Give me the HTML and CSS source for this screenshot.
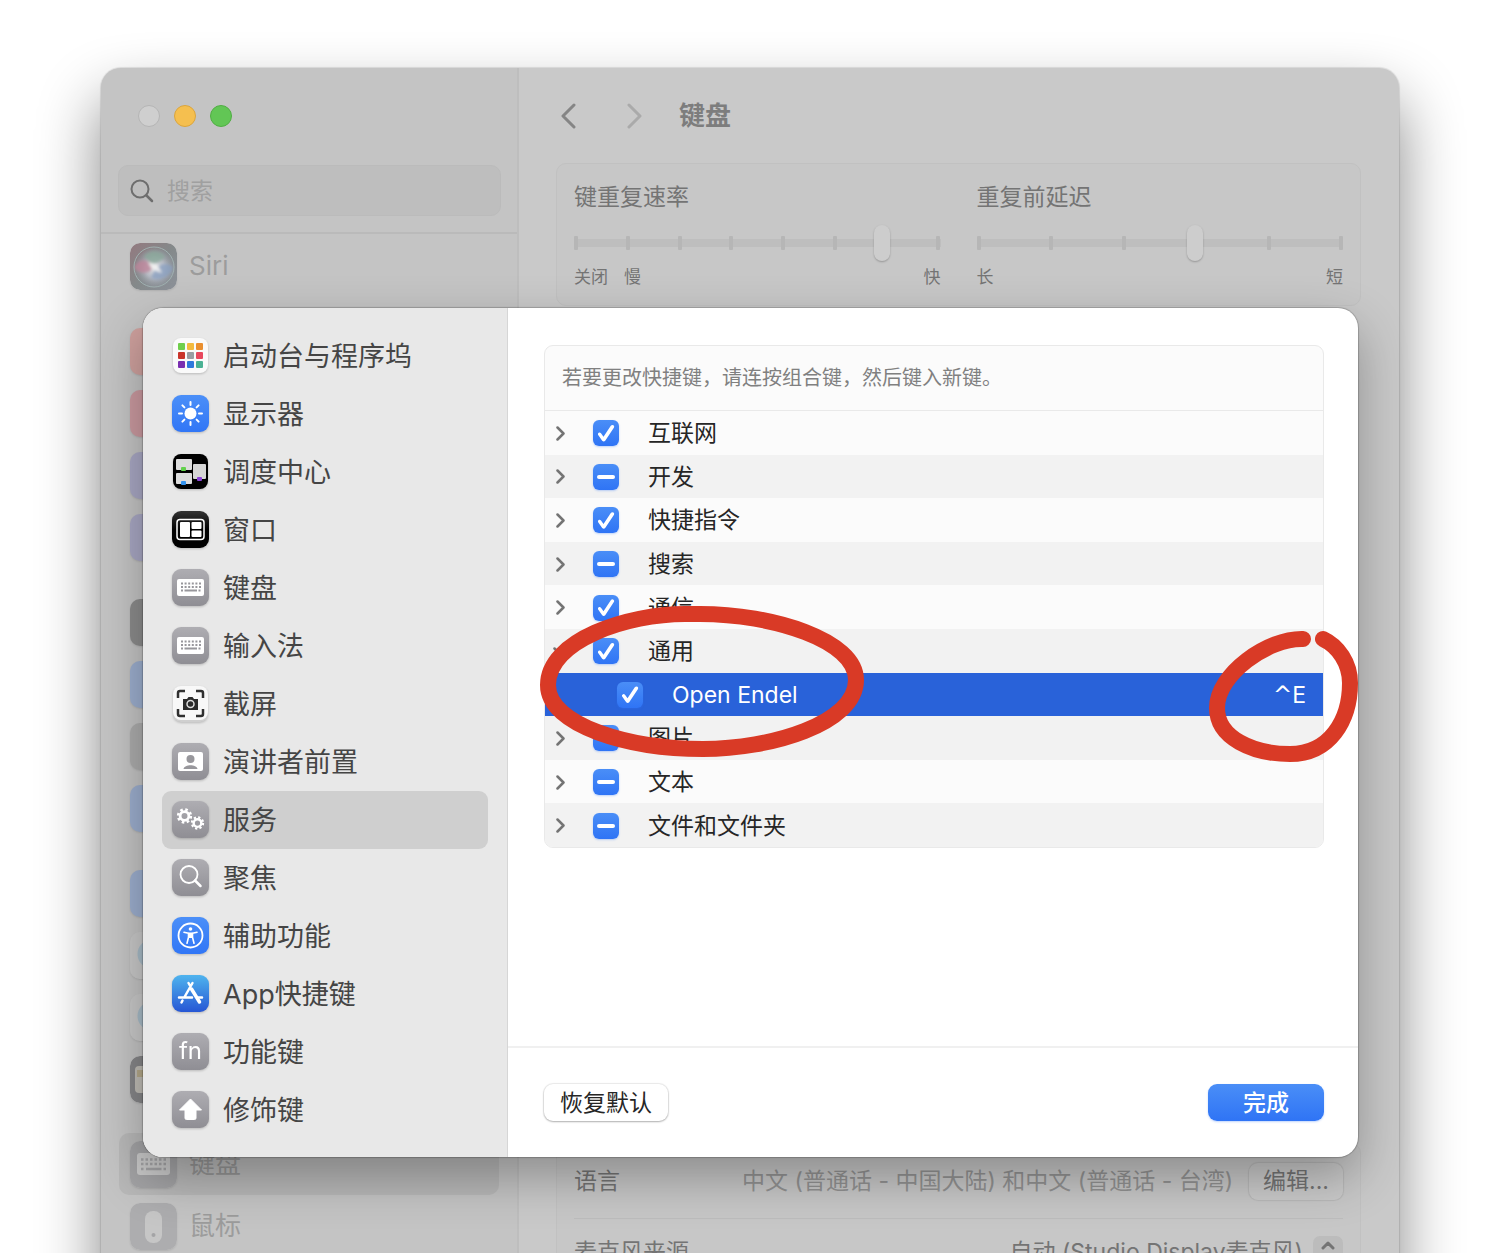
FILE: index.html
```html
<!DOCTYPE html>
<html lang="zh-CN">

<head>
    <meta charset="UTF-8">
    <meta name="viewport" content="width=device-width, initial-scale=1.0">
    <title>键盘</title>
    <link rel="stylesheet" href="styles.css">
</head>

<body>
    <!-- shared shapes -->
    <svg class="defs" width="0" height="0" aria-hidden="true">
        <symbol id="keyboard" viewBox="0 0 37 37">
            <rect x="5" y="10" width="27" height="17" rx="2" fill="#fff"/>
            <path d="M9 14.5h20M9 18h20" stroke="#98979c" stroke-width="2" stroke-dasharray="2 1.6"/>
            <path d="M9 21.5h2M12.500 21.500h12.500M26.500 21.500h2" stroke="#98979c" stroke-width="2"/>
        </symbol>
        <symbol id="search" viewBox="0 0 24 24">
            <circle cx="10" cy="10" r="8.500" fill="none" stroke="currentColor" stroke-width="2"/>
            <path d="M16.500 16.500L22 22" stroke="currentColor" stroke-width="2.500" stroke-linecap="round"/>
        </symbol>
        <symbol id="chevron" viewBox="0 0 9 15">
            <path d="M1.500 1.500L7.500 7.500L1.500 13.500" fill="none" stroke="currentColor" stroke-width="2.500" stroke-linecap="round" stroke-linejoin="round"/>
        </symbol>
        <symbol id="gear" viewBox="-10 -10 20 20">
            <circle r="5.500" fill="none" stroke="#fff" stroke-width="3.500"/>
            <circle r="8" fill="none" stroke="#fff" stroke-width="3.200" stroke-dasharray="3.140 3.140"/>
        </symbol>
    </svg>

    <div class="window">
        <aside class="sidebar">
            <div class="sidebar-top">
                <div class="lights">
                    <span class="light"></span>
                    <span class="light light-yellow"></span>
                    <span class="light light-green"></span>
                </div>
                <label class="search">
                    <svg width="24" height="24"><use href="#search"/></svg>
                    <input type="text" placeholder="搜索" aria-label="搜索">
                </label>
            </div>
            <div class="side-list">
                <div class="side-group">
                    <a class="side-row" href="#">
                        <svg class="side-icon" viewBox="0 0 47 47">
                            <defs>
                                <linearGradient id="siriBg" x1="0" y1="0" x2="1" y2="1">
                                    <stop offset="0" stop-color="#93797f"/>
                                    <stop offset=".5" stop-color="#84898a"/>
                                    <stop offset="1" stop-color="#8e939b"/>
                                </linearGradient>
                                <radialGradient id="siriGlow">
                                    <stop offset="0" stop-color="#e6e6e8"/>
                                    <stop offset=".5" stop-color="#b5b9c2"/>
                                    <stop offset="1" stop-color="#8e959e" stop-opacity=".2"/>
                                </radialGradient>
                                <filter id="siriSoft"><feGaussianBlur stdDeviation="1.5"/></filter>
                            </defs>
                            <rect width="47" height="47" rx="10" fill="url(#siriBg)"/>
                            <circle cx="25" cy="25" r="20" fill="url(#siriGlow)"/>
                            <g filter="url(#siriSoft)">
                                <path d="M4 25c5-11 14-9 21-1-7 6-13 9-21 1z" fill="#bd8498" opacity=".8"/>
                                <path d="M25 26c7-7 15-6 18-1-3 9-14 14-22 10z" fill="#8ba0c0" opacity=".8"/>
                                <path d="M14 13c6-7 17-6 21 1-5 5-10 7-14 7z" fill="#8aa799" opacity=".8"/>
                                <path d="M18 19l9 3 5 8-10-4z" fill="#f0f0f0"/>
                            </g>
                            <circle cx="24" cy="24" r="20" fill="none" stroke="#a0b0b0" stroke-width="1"/>
                        </svg>
                        <span>Siri</span>
                    </a>
                </div>
                <div class="side-group">
                    <a class="side-row" href="#" aria-label="通知"><span class="side-icon tint-red"></span></a>
                    <a class="side-row" href="#" aria-label="声音"><span class="side-icon tint-pink"></span></a>
                    <a class="side-row" href="#" aria-label="专注模式"><span class="side-icon tint-purple"></span></a>
                    <a class="side-row" href="#" aria-label="屏幕使用时间"><span class="side-icon tint-purple"></span></a>
                </div>
                <div class="side-group">
                    <a class="side-row" href="#" aria-label="锁定屏幕"><span class="side-icon tint-dark"></span></a>
                    <a class="side-row" href="#" aria-label="触控 ID"><span class="side-icon tint-blue"></span></a>
                    <a class="side-row" href="#" aria-label="登录密码"><span class="side-icon tint-gray"></span></a>
                    <a class="side-row" href="#" aria-label="用户与群组"><span class="side-icon tint-blue"></span></a>
                </div>
                <div class="side-group">
                    <a class="side-row" href="#" aria-label="密码"><span class="side-icon tint-blue"></span></a>
                    <a class="side-row" href="#" aria-label="互联网账户"><span class="side-icon tint-white"></span></a>
                    <a class="side-row" href="#" aria-label="Game Center"><span class="side-icon tint-white"></span></a>
                    <a class="side-row" href="#" aria-label="钱包">
                        <svg class="side-icon" viewBox="0 0 47 47">
                            <rect width="47" height="47" rx="10" fill="#868688"/>
                            <rect x="5" y="10" width="37" height="27" rx="4" fill="#c0bdb6"/>
                            <path d="M7 14h33v7H7z" fill="#b5a98a"/>
                        </svg>
                    </a>
                </div>
                <div class="side-group">
                    <a class="side-row side-row-active" href="#">
                        <svg class="side-icon" viewBox="0 0 47 47">
                            <rect width="47" height="47" rx="10" fill="#a3a3a5"/>
                            <rect x="7" y="12" width="33" height="22" rx="3" fill="#c9c9c9"/>
                            <path d="M11 18.500h25M11 23h25" stroke="#a3a3a5" stroke-width="2.500" stroke-dasharray="2.500 2"/>
                            <path d="M11 28h2.500M16 28h15.500M33.500 28h2.500" stroke="#a3a3a5" stroke-width="2.500"/>
                        </svg>
                        <span>键盘</span>
                    </a>
                    <a class="side-row" href="#">
                        <svg class="side-icon" viewBox="0 0 47 47">
                            <rect width="47" height="47" rx="10" fill="#adadaf"/>
                            <rect x="15" y="8" width="17" height="32" rx="8" fill="#c6c6c6"/>
                            <circle cx="23.500" cy="32" r="2" fill="#a4a4a6"/>
                        </svg>
                        <span>鼠标</span>
                    </a>
                </div>
            </div>
        </aside>

        <main class="content">
            <header class="toolbar">
                <button class="nav-button" aria-label="后退">
                    <svg width="16" height="28" viewBox="0 0 16 28"><path d="M14 3L3 14L14 25" fill="none" stroke="currentColor" stroke-width="3" stroke-linecap="round" stroke-linejoin="round"/></svg>
                </button>
                <button class="nav-button nav-disabled" aria-label="前进">
                    <svg width="16" height="28" viewBox="0 0 16 28"><path d="M3 3L14 14L3 25" fill="none" stroke="currentColor" stroke-width="3" stroke-linecap="round" stroke-linejoin="round"/></svg>
                </button>
                <h1>键盘</h1>
            </header>

            <section class="card sliders">
                <div class="slider">
                    <label for="rate">键重复速率</label>
                    <div class="track">
                        <div class="ticks"><i></i><i></i><i></i><i></i><i></i><i></i><i></i><i></i></div>
                        <input type="range" id="rate" min="0" max="7" value="6">
                    </div>
                    <div class="scale"><span>关闭</span><span>慢</span><span class="scale-end">快</span></div>
                </div>
                <div class="slider">
                    <label for="delay">重复前延迟</label>
                    <div class="track">
                        <div class="ticks"><i></i><i></i><i></i><i></i><i></i><i></i></div>
                        <input type="range" id="delay" min="0" max="5" value="3">
                    </div>
                    <div class="scale"><span>长</span><span class="scale-end">短</span></div>
                </div>
            </section>

            <section class="card dictation">
                <div class="setting">
                    <span>语言</span>
                    <span class="setting-value">中文 (普通话 - 中国大陆) 和中文 (普通话 - 台湾)</span>
                    <button class="edit">编辑...</button>
                </div>
                <div class="setting">
                    <label for="mic">麦克风来源</label>
                    <select id="mic">
                        <option>自动 (Studio Display麦克风)</option>
                    </select>
                    <span class="stepper">
                        <svg width="14" height="24" viewBox="0 0 14 24" fill="none" stroke="currentColor" stroke-width="3" stroke-linecap="round" stroke-linejoin="round"><path d="M2 8L7 3L12 8M2 16L7 21L12 16"/></svg>
                    </span>
                </div>
            </section>
        </main>

        <div class="sheet" role="dialog" aria-label="键盘快捷键">
            <nav class="sheet-nav">
                <a href="#" class="nav-item">
                    <svg class="icon" viewBox="0 0 37 37">
                        <rect x="1" y="1" width="35" height="35" rx="8" fill="#fafafa"/>
                        <rect x="6" y="6" width="7" height="7" rx="1" fill="#6fce4b"/>
                        <rect x="15" y="6" width="7" height="7" rx="1" fill="#f3ba3e"/>
                        <rect x="24" y="6" width="7" height="7" rx="1" fill="#ea8f2f"/>
                        <rect x="6" y="15" width="7" height="7" rx="1" fill="#c9342b"/>
                        <rect x="15" y="15" width="7" height="7" rx="1" fill="#9a9da2"/>
                        <rect x="24" y="15" width="7" height="7" rx="1" fill="#e8485d"/>
                        <rect x="6" y="24" width="7" height="7" rx="1" fill="#7a2fb0"/>
                        <rect x="15" y="24" width="7" height="7" rx="1" fill="#2f79dc"/>
                        <rect x="24" y="24" width="7" height="7" rx="1" fill="#4bb193"/>
                    </svg>
                    <span class="nav-text">启动台与程序坞</span>
                </a>
                <a href="#" class="nav-item">
                    <svg class="icon icon-blue" viewBox="0 0 37 37">
                        <circle cx="18.500" cy="18.500" r="6" fill="#fff"/>
                        <path d="M18.500 7v3M18.500 27v3M7 18.500h3M27 18.500h3M10.400 10.400l2 2M24.600 24.600l2 2M10.400 26.600l2-2M24.600 12.400l2-2" stroke="#fff" stroke-width="2" stroke-linecap="round"/>
                    </svg>
                    <span class="nav-text">显示器</span>
                </a>
                <a href="#" class="nav-item">
                    <svg class="icon" viewBox="0 0 37 37">
                        <rect x="1" y="1" width="35" height="35" rx="8" fill="#000"/>
                        <rect x="4" y="6" width="16" height="11" rx="1" fill="#dcdcdc"/>
                        <rect x="4" y="20" width="16" height="11" rx="1" fill="#dcdcdc"/>
                        <rect x="21" y="11" width="13" height="15" rx="1" fill="#d6d6d6"/>
                        <rect x="9" y="14" width="5" height="4" rx="1" fill="#62d14c"/>
                        <rect x="9" y="28" width="5" height="4" rx="1" fill="#3292ee"/>
                        <rect x="25" y="24" width="5" height="4" rx="1" fill="#8c44d6"/>
                    </svg>
                    <span class="nav-text">调度中心</span>
                </a>
                <a href="#" class="nav-item">
                    <svg class="icon icon-black" viewBox="0 0 37 37">
                        <rect x="5" y="8.500" width="27" height="20" rx="3" fill="none" stroke="#fff" stroke-width="1.500"/>
                        <rect x="8" y="11" width="10" height="15" rx="1" fill="#fff"/>
                        <rect x="19.500" y="11" width="10" height="7" rx="1" fill="#fff"/>
                        <rect x="19.500" y="19.500" width="10" height="6.500" rx="1" fill="#fff"/>
                    </svg>
                    <span class="nav-text">窗口</span>
                </a>
                <a href="#" class="nav-item">
                    <svg class="icon icon-gray"><use href="#keyboard"/></svg>
                    <span class="nav-text">键盘</span>
                </a>
                <a href="#" class="nav-item">
                    <svg class="icon icon-gray"><use href="#keyboard"/></svg>
                    <span class="nav-text">输入法</span>
                </a>
                <a href="#" class="nav-item">
                    <svg class="icon" viewBox="0 0 37 37">
                        <rect x="1" y="2" width="35" height="35" rx="8" fill="#cfcfcf"/>
                        <rect x="1" y="1" width="35" height="34" rx="8" fill="#f8f8f8"/>
                        <path d="M6 13V8q0-2 2-2h5M24 6h5q2 0 2 2v5M31 24v5q0 2-2 2h-5M13 31H8q-2 0-2-2v-5" fill="none" stroke="#303030" stroke-width="2.500"/>
                        <path d="M11 14h4l1.500-2h4l1.500 2h4v11H11z" fill="#2b2b2b"/>
                        <circle cx="18.500" cy="19" r="3.500" fill="#2b2b2b" stroke="#ddd" stroke-width="1.500"/>
                    </svg>
                    <span class="nav-text">截屏</span>
                </a>
                <a href="#" class="nav-item">
                    <svg class="icon icon-gray" viewBox="0 0 37 37">
                        <rect x="6" y="9" width="25" height="19" rx="2" fill="#fff"/>
                        <circle cx="18.500" cy="16" r="4" fill="#98979c"/>
                        <path d="M11.500 26c1-5 13-5 14 0z" fill="#98979c"/>
                    </svg>
                    <span class="nav-text">演讲者前置</span>
                </a>
                <a href="#" class="nav-item nav-item-active">
                    <svg class="icon icon-gray" viewBox="0 0 37 37">
                        <use href="#gear" x="4.500" y="7" width="16" height="16"/>
                        <use href="#gear" x="18.500" y="15" width="14" height="14"/>
                    </svg>
                    <span class="nav-text">服务</span>
                </a>
                <a href="#" class="nav-item">
                    <svg class="icon icon-gray" viewBox="0 0 37 37">
                        <circle cx="17" cy="15.500" r="8.500" fill="none" stroke="#fff" stroke-width="1.800"/>
                        <path d="M23 21.500L28.500 27" stroke="#fff" stroke-width="2.500" stroke-linecap="round"/>
                    </svg>
                    <span class="nav-text">聚焦</span>
                </a>
                <a href="#" class="nav-item">
                    <svg class="icon icon-blue" viewBox="0 0 37 37">
                        <circle cx="18.500" cy="18.500" r="12" fill="none" stroke="#fff" stroke-width="1.800"/>
                        <circle cx="18.500" cy="12" r="1.800" fill="#fff"/>
                        <path d="M12 15.200l4.500 1v4l-1.500 6M25 15.200l-4.500 1v4l1.500 6" fill="none" stroke="#fff" stroke-width="1.600" stroke-linecap="round" stroke-linejoin="round"/>
                        <path d="M16.500 15.500h4v5.500h-4z" fill="#fff"/>
                    </svg>
                    <span class="nav-text">辅助功能</span>
                </a>
                <a href="#" class="nav-item">
                    <svg class="icon icon-store" viewBox="0 0 37 37">
                        <path d="M16.500 8L18.500 11.500M20.500 8L12.500 22M10.500 25.500l-1 2M7 22.500h13M25 22.500h5" fill="none" stroke="#fff" stroke-width="2.500" stroke-linecap="round"/>
                        <path d="M19.500 14L27.500 27" fill="none" stroke="#fff" stroke-width="3.500" stroke-linecap="round"/>
                    </svg>
                    <span class="nav-text">App快捷键</span>
                </a>
                <a href="#" class="nav-item">
                    <span class="icon icon-gray icon-fn">fn</span>
                    <span class="nav-text">功能键</span>
                </a>
                <a href="#" class="nav-item">
                    <svg class="icon icon-gray" viewBox="0 0 37 37">
                        <path d="M18.500 8L29.500 19H24v8q0 1.500-1.500 1.500h-8Q13 28.500 13 27v-8H7.500z" fill="#fff" stroke="#fff" stroke-linejoin="round"/>
                    </svg>
                    <span class="nav-text">修饰键</span>
                </a>
            </nav>

            <div class="sheet-main">
                <div class="services">
                    <div class="services-box">
                        <p>若要更改快捷键，请连按组合键，然后键入新键。</p>
                        <table>
                            <tr>
                                <td class="twist"><button aria-label="展开"><svg width="9" height="15"><use href="#chevron"/></svg></button></td>
                                <td><label><input type="checkbox" checked>互联网</label></td>
                                <td class="shortcut"></td>
                            </tr>
                            <tr>
                                <td class="twist"><button aria-label="展开"><svg width="9" height="15"><use href="#chevron"/></svg></button></td>
                                <td><label><input type="checkbox" class="mixed">开发</label></td>
                                <td class="shortcut"></td>
                            </tr>
                            <tr>
                                <td class="twist"><button aria-label="展开"><svg width="9" height="15"><use href="#chevron"/></svg></button></td>
                                <td><label><input type="checkbox" checked>快捷指令</label></td>
                                <td class="shortcut"></td>
                            </tr>
                            <tr>
                                <td class="twist"><button aria-label="展开"><svg width="9" height="15"><use href="#chevron"/></svg></button></td>
                                <td><label><input type="checkbox" class="mixed">搜索</label></td>
                                <td class="shortcut"></td>
                            </tr>
                            <tr>
                                <td class="twist"><button aria-label="展开"><svg width="9" height="15"><use href="#chevron"/></svg></button></td>
                                <td><label><input type="checkbox" checked>通信</label></td>
                                <td class="shortcut"></td>
                            </tr>
                            <tr>
                                <td class="twist twist-open"><button aria-label="折叠"><svg width="9" height="15"><use href="#chevron"/></svg></button></td>
                                <td><label><input type="checkbox" checked>通用</label></td>
                                <td class="shortcut"></td>
                            </tr>
                            <tr class="selected">
                                <td class="twist"></td>
                                <td class="child"><label><input type="checkbox" checked>Open Endel</label></td>
                                <td class="shortcut"><span class="ctrl">^</span>E</td>
                            </tr>
                            <tr>
                                <td class="twist"><button aria-label="展开"><svg width="9" height="15"><use href="#chevron"/></svg></button></td>
                                <td><label><input type="checkbox" class="mixed">图片</label></td>
                                <td class="shortcut"></td>
                            </tr>
                            <tr>
                                <td class="twist"><button aria-label="展开"><svg width="9" height="15"><use href="#chevron"/></svg></button></td>
                                <td><label><input type="checkbox" class="mixed">文本</label></td>
                                <td class="shortcut"></td>
                            </tr>
                            <tr>
                                <td class="twist"><button aria-label="展开"><svg width="9" height="15"><use href="#chevron"/></svg></button></td>
                                <td><label><input type="checkbox" class="mixed">文件和文件夹</label></td>
                                <td class="shortcut"></td>
                            </tr>
                        </table>
                    </div>
                    <!-- hand-drawn marks -->
                    <svg class="mark mark-service" width="324" height="154" viewBox="0 0 324 154">
                        <path d="M160 10C232 10 316 36 316 76C316 120 230 145 163 145C90 145 8 122 8 81C8 36 88 10 145 10Z"/>
                    </svg>
                    <svg class="mark mark-key" width="150" height="136" viewBox="0 0 150 136">
                        <path d="M95 11C60 10 9 46 9 80C9 110 45 126 82 126C122 126 142 92 142 55C142 35 130 18 115 11"/>
                    </svg>
                </div>
                <footer class="sheet-footer">
                    <button class="button">恢复默认</button>
                    <button class="button button-primary">完成</button>
                </footer>
            </div>
        </div>
    </div>

    <script>
        document.querySelectorAll('.mixed').forEach(box => box.indeterminate = true);
    </script>
</body>

</html>
```

FILE: styles.css
```css
* {
    box-sizing: border-box;
}

body {
    margin: 0;
    padding: 68px 101px 0;
    height: 100vh;
    overflow: hidden;
    background-color: #fff;
    font-family: Inter, "Noto Sans CJK SC", sans-serif;
    font-size: 23px;
    line-height: 32px;
}

button,
input,
select {
    font: inherit;
    color: inherit;
    margin: 0;
    padding: 0;
    border: none;
    background: none;
}

a {
    color: inherit;
    text-decoration: none;
}

.defs {
    position: absolute;
}

.window {
    position: relative;
    display: flex;
    border-radius: 20px;
    background-color: #c9c9c9;
    box-shadow: 0 0 1px 1px rgba(0, 0, 0, 0.1), 0 32px 62px rgba(0, 0, 0, 0.48);
}

/* settings sidebar */

.sidebar {
    width: 418px;
    flex-shrink: 0;
    background-color: #c4c4c4;
    border-right: 2px solid #bebebe;
    border-radius: 20px 0 0 0;
}

.sidebar-top {
    padding: 37px 16px 16px 17px;
    border-bottom: 2px solid #bababa;
}

.lights {
    display: flex;
    gap: 14px;
    padding-left: 20px;
    margin-bottom: 38px;
}

.light {
    width: 22px;
    height: 22px;
    border-radius: 50%;
    background-color: #cfcfcf;
    border: 1px solid #b5b5b5;
}

.light-yellow {
    background-color: #f5bf4f;
    border-color: #dba53c;
}

.light-green {
    background-color: #62c655;
    border-color: #50ae43;
}

.search {
    display: flex;
    align-items: center;
    gap: 13px;
    height: 51px;
    padding: 0 11px;
    border-radius: 10px;
    background-color: #bebebe;
    border: 1px solid #bbb;
    color: #6e6e6e;
}

.search input {
    flex: 1;
    min-width: 0;
    outline: none;
}

.search input::placeholder {
    color: #a0a0a0;
}

.side-list {
    display: flex;
    flex-direction: column;
    gap: 23px;
    padding: 1px 18px 40px;
}

.side-row {
    display: flex;
    align-items: center;
    gap: 12px;
    height: 62px;
    padding-left: 11px;
    border-radius: 10px;
    font-size: 26px;
    color: #9c9c9c;
}

.side-row-active {
    background-color: #b8b8b8;
    color: #949494;
}

.side-icon {
    width: 47px;
    height: 47px;
    border-radius: 10px;
    box-shadow: 0 1px 2px rgba(0, 0, 0, 0.1);
}

.tint-red {
    background-color: #cfa19e;
}

.tint-pink {
    background-color: #cb9aa0;
}

.tint-purple {
    background-color: #a9a8c4;
}

.tint-dark {
    background-color: #8c8c8c;
}

.tint-blue {
    background-color: #9dafcf;
}

.tint-gray {
    background-color: #adadad;
}

.tint-white {
    background: radial-gradient(circle at 22px 22px, #a8bcc8 14px, #c9c9c9 15px);
}

/* settings content */

.content {
    flex: 1;
    min-width: 0;
    padding: 0 38px 0 37px;
}

.toolbar {
    display: flex;
    align-items: center;
    height: 95px;
    padding-left: 4px;
}

.toolbar h1 {
    margin: 0;
    font-size: 26px;
    font-weight: 700;
    color: #7d7d7d;
}

.nav-button {
    display: flex;
    margin-right: 50px;
    color: #858585;
}

.nav-disabled {
    margin-right: 37px;
    color: #aaa;
}

.card {
    border: 1px solid #c1c1c1;
    border-radius: 10px;
    background-color: #c7c7c7;
    color: #747474;
}

.sliders {
    display: grid;
    grid-template-columns: 1fr 1fr;
    gap: 36px;
    height: 143px;
    padding: 17px;
}

.slider label {
    display: block;
}

.track {
    position: relative;
    height: 36px;
    margin: 12px 0 4px;
    display: flex;
    align-items: center;
}

.track::before {
    content: "";
    flex: 1;
    height: 8px;
    background-color: #bebebe;
}

.ticks {
    position: absolute;
    left: 0;
    right: 0;
    top: 11px;
    display: flex;
    justify-content: space-between;
}

.ticks i {
    width: 4px;
    height: 14px;
    border-radius: 1px;
    background-color: #b6b6b6;
}

.track input {
    position: absolute;
    left: 0;
    top: 0;
    width: 100%;
    height: 36px;
    appearance: none;
}

.track input::-webkit-slider-thumb {
    appearance: none;
    width: 16px;
    height: 36px;
    border-radius: 8px;
    background-color: #cdcdcd;
    box-shadow: 0 1px 2px rgba(0, 0, 0, 0.25);
}

.scale {
    display: flex;
    gap: 16px;
    font-size: 17px;
    line-height: 24px;
}

.scale-end {
    margin-left: auto;
}

.dictation {
    margin-top: 837px;
    padding: 0 17px;
}

.setting {
    display: flex;
    align-items: center;
    gap: 16px;
    height: 74px;
}

.setting + .setting {
    height: 66px;
    gap: 10px;
    border-top: 1px solid #bdbdbd;
}

.setting-value {
    margin-left: auto;
    color: #929292;
    white-space: nowrap;
}

.edit {
    height: 37px;
    padding: 0 14px;
    border-radius: 9px;
    background-color: #cacaca;
    box-shadow: 0 0 1px 1px rgba(0, 0, 0, 0.08);
}

.setting select {
    appearance: none;
    margin-left: auto;
    text-align: right;
    outline: none;
}

.stepper {
    display: flex;
    justify-content: center;
    padding: 4px 8px;
    border-radius: 7px;
    background-color: #bcbcbc;
}

/* shortcuts sheet */

.sheet {
    position: absolute;
    left: 42px;
    right: 41px;
    top: 240px;
    display: flex;
    border-radius: 20px;
    background-color: #fff;
    box-shadow: 0 0 1px 1px rgba(0, 0, 0, 0.2), 0 20px 50px rgba(0, 0, 0, 0.3);
}

.sheet-nav {
    width: 365px;
    flex-shrink: 0;
    padding: 19px 19px 18px;
    border-right: 1px solid #d6d6d6;
    border-radius: 20px 0 0 20px;
    background-color: #e8e8e8;
}

.nav-item {
    display: flex;
    align-items: center;
    gap: 14px;
    height: 58px;
    padding-left: 10px;
    border-radius: 9px;
    font-size: 27px;
    color: #454545;
}

.nav-item-active {
    background-color: #cfcfcf;
}

.nav-text {
    padding-top: 2px;
}

.icon {
    width: 37px;
    height: 37px;
    margin-bottom: 2px;
    flex-shrink: 0;
    border-radius: 9px;
    filter: drop-shadow(0 1px 1px rgba(0, 0, 0, 0.2));
}

.icon-gray {
    background: linear-gradient(#aeadb2, #8f8e94);
}

.icon-blue {
    background: linear-gradient(#4b8ff8, #3176f6);
}

.icon-black {
    background: linear-gradient(#333, #000 50%);
}

.icon-store {
    background: linear-gradient(#4fb4ee, #2656d4);
}

.icon-fn {
    color: #fff;
    font-size: 24px;
    line-height: 36px;
    text-align: center;
}

.sheet-main {
    flex: 1;
    min-width: 0;
    display: flex;
    flex-direction: column;
}

.services {
    position: relative;
    margin: 37px 34px auto 36px;
}

.services-box {
    border: 1px solid #e9e9e9;
    border-radius: 9px;
    overflow: hidden;
    background-color: #fbfbfb;
}

.services p {
    margin: 0;
    padding: 16px 17px;
    border-bottom: 1px solid #e9e9e9;
    font-size: 20px;
    color: #808080;
}

.services table {
    width: 100%;
    height: 436px;
    border-collapse: collapse;
    color: #262626;
}

.services td {
    padding: 1px 0 0;
}

.services tr:nth-child(even) {
    background-color: #f2f2f2;
}

.services .selected {
    background-color: #2962d9;
    color: #fff;
}

.services .twist {
    width: 48px;
    padding-left: 11px;
    color: #747474;
}

.twist button,
.twist svg {
    display: block;
}

.twist-open svg {
    transform: rotate(90deg);
}

.services label {
    display: flex;
    align-items: center;
    gap: 29px;
}

.services .child {
    padding-left: 24px;
}

.services .shortcut {
    padding-right: 17px;
    text-align: right;
}

.ctrl {
    font-family: "DejaVu Sans", sans-serif;
}

.services input {
    appearance: none;
    display: grid;
    place-items: center;
    width: 26px;
    height: 26px;
    border-radius: 6px;
    background: linear-gradient(#4a8ef7, #2f74f5);
    box-shadow: 0 1px 2px rgba(47, 116, 245, 0.3);
}

.services input:checked::after {
    content: "";
    width: 18px;
    height: 18px;
    background-color: #fff;
    clip-path: path("M1 10.500Q0.500 9 2 8.300Q3.200 8 4 9L6.500 12.500L13.800 1.500Q15 0.200 16.500 1Q17.600 2 17 3.200L8.200 16.500Q6.800 18 5.200 16.500Z");
}

.services input:indeterminate::after {
    content: "";
    width: 18px;
    height: 4px;
    border-radius: 2px;
    background-color: #fff;
}

.mark {
    position: absolute;
    fill: none;
    stroke: #d93a26;
    stroke-width: 16px;
    stroke-linecap: round;
    pointer-events: none;
}

.mark-service {
    left: -4px;
    top: 259px;
}

.mark-key {
    right: -34px;
    top: 283px;
}

.sheet-footer {
    display: flex;
    justify-content: space-between;
    padding: 36px 34px 36px 36px;
    border-top: 2px solid #f0f0f0;
}

.button {
    height: 37px;
    min-width: 116px;
    padding: 0 16px;
    border-radius: 9px;
    color: #262626;
    background-color: #fff;
    box-shadow: 0 0 1px 1px rgba(0, 0, 0, 0.08), 0 1px 2px rgba(0, 0, 0, 0.25);
}

.button-primary {
    color: #fff;
    font-weight: 500;
    background: linear-gradient(#4a8ef7, #2f74f5);
    box-shadow: 0 1px 2px rgba(47, 116, 245, 0.3);
}
```
